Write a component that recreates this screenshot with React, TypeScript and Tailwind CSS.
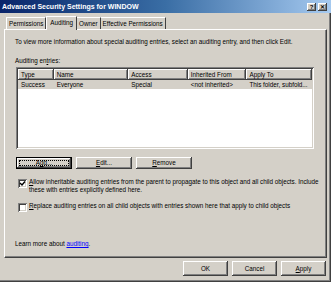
import React from 'react';

const raised =
  'shadow-[inset_-1px_-1px_#404040,inset_1px_1px_#ffffff,inset_-2px_-2px_#808080,inset_2px_2px_#d4d0c8]';
const sunken =
  'shadow-[inset_1px_1px_#808080,inset_-1px_-1px_#ffffff,inset_2px_2px_#404040,inset_-2px_-2px_#d4d0c8]';

const Btn: React.FC<{ w: string; h: string; children: React.ReactNode; def?: boolean }> = ({ w, h, children, def }) => (
  <div
    className={`${w} ${h} relative flex items-center justify-center bg-[#d4d0c8] text-black ${
      def ? 'border border-black' : ''
    } ${raised}`}
  >
    {def && <div className="absolute inset-[2px] border border-dotted border-black" />}
    {children}
  </div>
);

const Check: React.FC<{ on?: boolean }> = ({ on }) => (
  <div className={`w-[9px] h-[9px] bg-white shrink-0 flex items-center justify-center ${sunken}`}>
    {on && (
      <svg width="7" height="7" viewBox="0 0 7 7">
        <path d="M1 3 L3 5 L6 1.5" stroke="#000" strokeWidth="1.4" fill="none" />
      </svg>
    )}
  </div>
);

export default function App() {
  const cols = [
    { label: 'Type', w: 'w-[36px]' },
    { label: 'Name', w: 'w-[75px]' },
    { label: 'Access', w: 'w-[60px]' },
    { label: 'Inherited From', w: 'w-[59px]' },
    { label: 'Apply To', w: 'w-[66px]' },
  ];
  const row = ['Success', 'Everyone', 'Special', '<not inherited>', 'This folder, subfold...'];

  return (
    <div
      className="w-[331px] h-[282px] bg-[#d4d0c8] flex flex-col overflow-hidden text-[6.3px] leading-[8px] text-black shadow-[inset_-1px_-1px_#404040,inset_-2px_-2px_#808080]"
      style={{ fontFamily: '"Liberation Sans", Arial, sans-serif' }}
    >
      {/* title bar */}
      <div className="h-[13px] shrink-0 flex items-center justify-between pl-[2px] pr-[4px] bg-gradient-to-r from-[#0a246a] via-[#3a6ea5] to-[#a6caf0]">
        <span className="text-white font-bold text-[7px] whitespace-nowrap">
          Advanced Security Settings for WINDOW
        </span>
        <div className="flex gap-[2px]">
          <div className={`w-[9px] h-[8px] bg-[#d4d0c8] flex items-center justify-center font-bold text-[6px] ${raised}`}>?</div>
          <div className={`w-[9px] h-[8px] bg-[#d4d0c8] flex items-center justify-center font-bold text-[6px] ${raised}`}>✕</div>
        </div>
      </div>

      {/* tabs */}
      <div className="h-[16px] shrink-0 pl-[6px] flex items-end">
        <div className="h-[12px] px-[2px] flex items-center border-t border-l border-white border-r border-r-[#404040]">
          Permissions
        </div>
        <div className="h-[14px] -mb-[1px] px-[3px] flex items-center bg-[#d4d0c8] border-t border-l border-white border-r border-r-[#404040] relative z-10 pb-[2px]">
          Auditing
        </div>
        <div className="h-[12px] px-[2px] flex items-center border-t border-white border-r border-r-[#404040]">
          Owner
        </div>
        <div className="h-[12px] px-[2px] flex items-center border-t border-white border-r border-r-[#404040]">
          Effective Permissions
        </div>
      </div>

      {/* tab panel */}
      <div className="mx-[4px] h-[229px] shrink-0 border-t border-l border-white border-r border-b border-r-[#404040] border-b-[#404040] shadow-[inset_-1px_-1px_#808080] pl-[10px] pr-[12px] flex flex-col">
        <div className="mt-[8px] whitespace-nowrap">
          To view more information about special auditing entries, select an auditing entry, and then click Edit.
        </div>
        <div className="mt-[11px]">
          Auditing en<span className="underline">t</span>ries:
        </div>
        <div className={`mt-[2px] ml-[1px] h-[82px] bg-white p-[2px] ${sunken}`}>
          <div className="flex h-[11px]">
            {cols.map((c) => (
              <div key={c.label} className={`${c.w} pl-[3px] flex items-center bg-[#d4d0c8] ${raised}`}>
                {c.label}
              </div>
            ))}
          </div>
          <div className="flex h-[9px] bg-[#d4d0c8]">
            {row.map((v, i) => (
              <div key={i} className={`${cols[i].w} pl-[3px] flex items-center whitespace-nowrap overflow-hidden`}>
                {v}
              </div>
            ))}
          </div>
        </div>

        <div className="mt-[8px] ml-[1px] flex gap-[4px]">
          <Btn w="w-[56px]" h="h-[12px]" def>
            <span>
              A<span className="underline">d</span>d...
            </span>
          </Btn>
          <Btn w="w-[56px]" h="h-[12px]">
            <span>
              <span className="underline">E</span>dit...
            </span>
          </Btn>
          <Btn w="w-[56px]" h="h-[12px]">
            <span>
              <span className="underline">R</span>emove
            </span>
          </Btn>
        </div>

        <div className="mt-[9px] ml-[3px] flex gap-[2px] items-start">
          <div className="mt-[1px]">
            <Check on />
          </div>
          <div className="whitespace-nowrap">
            <span className="underline">A</span>llow inheritable auditing entries from the parent to propagate to this object and all child objects. Include
            <br />
            these with entries explicitly defined here.
          </div>
        </div>

        <div className="mt-[8px] ml-[3px] flex gap-[2px] items-start">
          <div className="mt-[1px]">
            <Check />
          </div>
          <div className="whitespace-nowrap">
            <span className="underline">R</span>eplace auditing entries on all child objects with entries shown here that apply to child objects
          </div>
        </div>

        <div className="mt-[28px]">
          Learn more about <span className="text-[#0000ff] underline">auditing</span>.
        </div>
      </div>

      {/* dialog buttons */}
      <div className="mt-[3px] pr-[5px] flex justify-end gap-[4px]">
        <Btn w="w-[45px]" h="h-[15px]">OK</Btn>
        <Btn w="w-[45px]" h="h-[15px]">Cancel</Btn>
        <Btn w="w-[45px]" h="h-[15px]">
          <span>
            <span className="underline">A</span>pply
          </span>
        </Btn>
      </div>
    </div>
  );
}
